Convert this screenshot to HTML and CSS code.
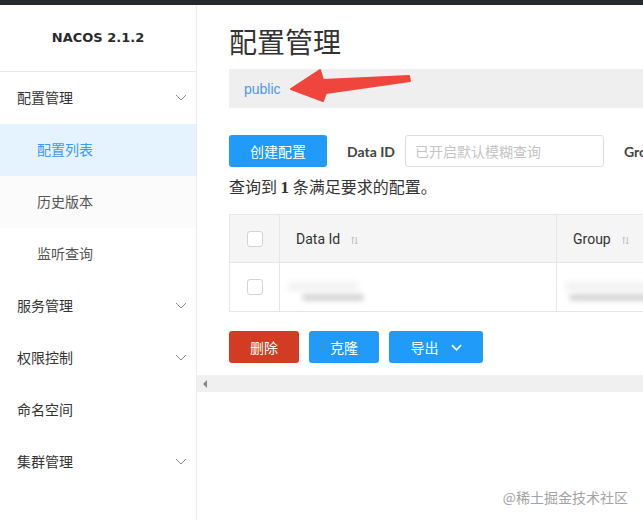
FILE: index.html
```html
<!DOCTYPE html>
<html lang="zh-CN">
<head>
<meta charset="utf-8">
<title>Nacos</title>
<link rel="stylesheet" href="styles.css">
</head>
<body>
<div class="topbar"></div>
<div class="layout">
  <aside class="sidebar">
    <div class="logo">NACOS 2.1.2</div>
    <nav class="menu">
      <div class="menu-item">配置管理<svg class="chev" viewBox="0 0 12 7"><polyline points="1,1 6,6 11,1"/></svg></div>
      <div class="menu-item sub active">配置列表</div>
      <div class="menu-item sub hover">历史版本</div>
      <div class="menu-item sub">监听查询</div>
      <div class="menu-item">服务管理<svg class="chev" viewBox="0 0 12 7"><polyline points="1,1 6,6 11,1"/></svg></div>
      <div class="menu-item">权限控制<svg class="chev" viewBox="0 0 12 7"><polyline points="1,1 6,6 11,1"/></svg></div>
      <div class="menu-item">命名空间</div>
      <div class="menu-item">集群管理<svg class="chev" viewBox="0 0 12 7"><polyline points="1,1 6,6 11,1"/></svg></div>
    </nav>
  </aside>
  <main class="main">
    <div class="content">
      <h1 class="title">配置管理</h1>
      <div class="crumb"><span class="ns">public</span></div>
      <div class="toolbar">
        <button class="btn primary create">创建配置</button>
        <span class="label">Data ID</span>
        <input class="input" placeholder="已开启默认模糊查询">
        <span class="label">Group</span>
      </div>
      <p class="result">查询到 <b>1</b> 条满足要求的配置。</p>
      <div class="table">
        <div class="tr head">
          <div class="td c1"><span class="cb"></span></div>
          <div class="td c2">Data Id<svg class="sort" viewBox="0 0 8 10"><path d="M2 1v8M0.5 2.5L2 1l1.5 1.5M6 1v8M4.5 7.5L6 9l1.5-1.5"/></svg></div>
          <div class="td c3">Group<svg class="sort" viewBox="0 0 8 10"><path d="M2 1v8M0.5 2.5L2 1l1.5 1.5M6 1v8M4.5 7.5L6 9l1.5-1.5"/></svg></div>
        </div>
        <div class="tr">
          <div class="td c1"><span class="cb"></span></div>
          <div class="td c2"><span class="blurs"><span class="blur faint"></span><span class="blur b1"></span></span></div>
          <div class="td c3"><span class="blurs"><span class="blur faint f2"></span><span class="blur b2"></span></span></div>
        </div>
      </div>
      <div class="actions">
        <button class="btn danger">删除</button>
        <button class="btn primary">克隆</button>
        <button class="btn primary export">导出<svg class="dd" viewBox="0 0 12 7"><polyline points="1,1 6,6 11,1"/></svg></button>
      </div>
    </div>
    <div class="hscroll"><span class="arrow-l"></span></div>
  </main>
</div>
<svg class="annot" width="643" height="520" viewBox="0 0 643 520"><polygon points="291,89 320,70 323,80 409,76 410,81 326,93 323,101" /></svg>
<div class="watermark">@稀土掘金技术社区</div>
</body>
</html>
```

FILE: styles.css
```css
* { box-sizing: border-box; }
html, body { margin: 0; padding: 0; }
body {
  width: 643px;
  height: 520px;
  overflow: hidden;
  background: #fff;
  font-family: "Noto Sans CJK SC", "Noto Sans", sans-serif;
  color: #333;
  position: relative;
}
.topbar { height: 5px; background: #25282c; }
.layout { display: flex; height: 515px; }
.sidebar {
  width: 197px;
  flex-shrink: 0;
  border-right: 1px solid #ececec;
}
.logo {
  height: 67px;
  border-bottom: 1px solid #e8e8e8;
  display: flex;
  align-items: center;
  justify-content: center;
  font-family: "DejaVu Sans", Verdana, sans-serif;
  font-weight: 700;
  font-size: 13px;
  color: #2a2a2a;
  padding-bottom: 2px;
}
.menu-item {
  height: 52px;
  display: flex;
  align-items: center;
  justify-content: space-between;
  padding: 0 9px 3px 17px;
  font-size: 14px;
  color: #333;
}
.menu-item.sub { padding-left: 37px; color: #555; }
.menu-item.active { background: #e5f3ff; color: #3a9bf0; }
.menu-item.hover { background: #fbfbfb; }
.chev { width: 12px; height: 7px; fill: none; stroke: #8a8a8a; stroke-width: 1; margin-top: 2px; }
.main { flex: 1; min-width: 0; overflow: hidden; }
.content { padding-left: 32px; }
.title {
  margin: 18px 0 0;
  font-size: 28px;
  font-weight: 400;
  line-height: 36px;
  color: #333;
  white-space: nowrap;
}
.crumb {
  margin-top: 10px;
  height: 39px;
  background: #efefef;
  display: flex;
  align-items: center;
  padding-left: 15px;
}
.ns { font-family: "Liberation Sans", Arial, sans-serif; font-size: 14px; color: #4f97e6; }
.toolbar {
  margin-top: 27px;
  display: flex;
  align-items: center;
  white-space: nowrap;
}
.btn {
  height: 32px;
  border: none;
  border-radius: 3px;
  color: #fff;
  font-family: "Noto Sans CJK SC", sans-serif;
  font-size: 14px;
  padding: 0;
  flex-shrink: 0;
  display: inline-flex;
  align-items: center;
  justify-content: center;
}
.primary { background: #209bfa; }
.danger { background: #d13c23; }
.create { width: 98px; }
.label {
  font-family: "Lato", "Noto Sans", sans-serif;
  font-weight: 700;
  font-size: 14px;
  color: #444;
  margin-left: 20px;
  flex-shrink: 0;
}
.input {
  margin-left: 10px;
  width: 199px;
  height: 32px;
  flex-shrink: 0;
  border: 1px solid #dcdcdc;
  border-radius: 3px;
  padding: 0 9px;
  font-family: "Noto Sans CJK SC", sans-serif;
  font-size: 14px;
  outline: none;
}
.input::placeholder { color: #c4c4c4; }
.result {
  margin: 8px 0 0;
  font-size: 16px;
  line-height: 22px;
  color: #333;
  white-space: nowrap;
}
.result b { font-family: "Liberation Serif", serif; font-size: 17px; }
.table {
  margin-top: 15px;
  width: 700px;
  border: 1px solid #e6e6e6;
}
.tr { display: flex; height: 48px; }
.tr.head { background: #f5f5f5; border-bottom: 1px solid #e6e6e6; height: 48px; }
.td {
  display: flex;
  align-items: center;
  border-right: 1px solid #e6e6e6;
  font-family: Roboto, "Noto Sans", sans-serif;
  font-size: 14px;
  color: #333;
}
.c1 { width: 50px; justify-content: center; }
.c2 { width: 277px; padding-left: 16px; }
.c3 { flex: 1; padding-left: 16px; border-right: none; }
.cb {
  width: 16px;
  height: 16px;
  border: 1px solid #d4d4d4;
  border-radius: 3px;
  background: #fff;
}
.sort { width: 7px; height: 9px; margin-left: 11px; margin-top: 4px; fill: none; stroke: #b0b0b0; stroke-width: 0.9; }
.blurs { display: flex; flex-direction: column; gap: 3px; margin-top: 8px; margin-left: -8px; }
.blur { display: block; height: 7px; background: #d6d6d6; filter: blur(2.5px); border-radius: 4px; }
.blur.faint { height: 9px; width: 70px; background: #f1f1f1; filter: blur(3px); }
.blur.f2 { width: 100px; }
.b1 { width: 62px; margin-left: 14px; }
.b2 { width: 100px; margin-left: 4px; }
.actions {
  margin-top: 19px;
  display: flex;
  gap: 10px;
}
.actions .btn { width: 70px; }
.actions .export { width: 94px; gap: 12px; }
.dd { width: 11px; height: 7px; fill: none; stroke: #fff; stroke-width: 1.8; }
.hscroll {
  margin-top: 12px;
  height: 17px;
  background: #f0f0f0;
  display: flex;
  align-items: center;
  padding-left: 6px;
}
.arrow-l {
  width: 0; height: 0;
  border-top: 4px solid transparent;
  border-bottom: 4px solid transparent;
  border-right: 4px solid #888;
}
.annot { position: absolute; left: 0; top: 0; pointer-events: none; }
.annot polygon { fill: #f0453d; stroke: #f0453d; stroke-width: 2; stroke-linejoin: round; }
.watermark {
  position: absolute;
  right: 15px;
  bottom: 13px;
  font-size: 14px;
  color: #a3a3a3;
  text-shadow: 0 0 2px #fff;
}
```
